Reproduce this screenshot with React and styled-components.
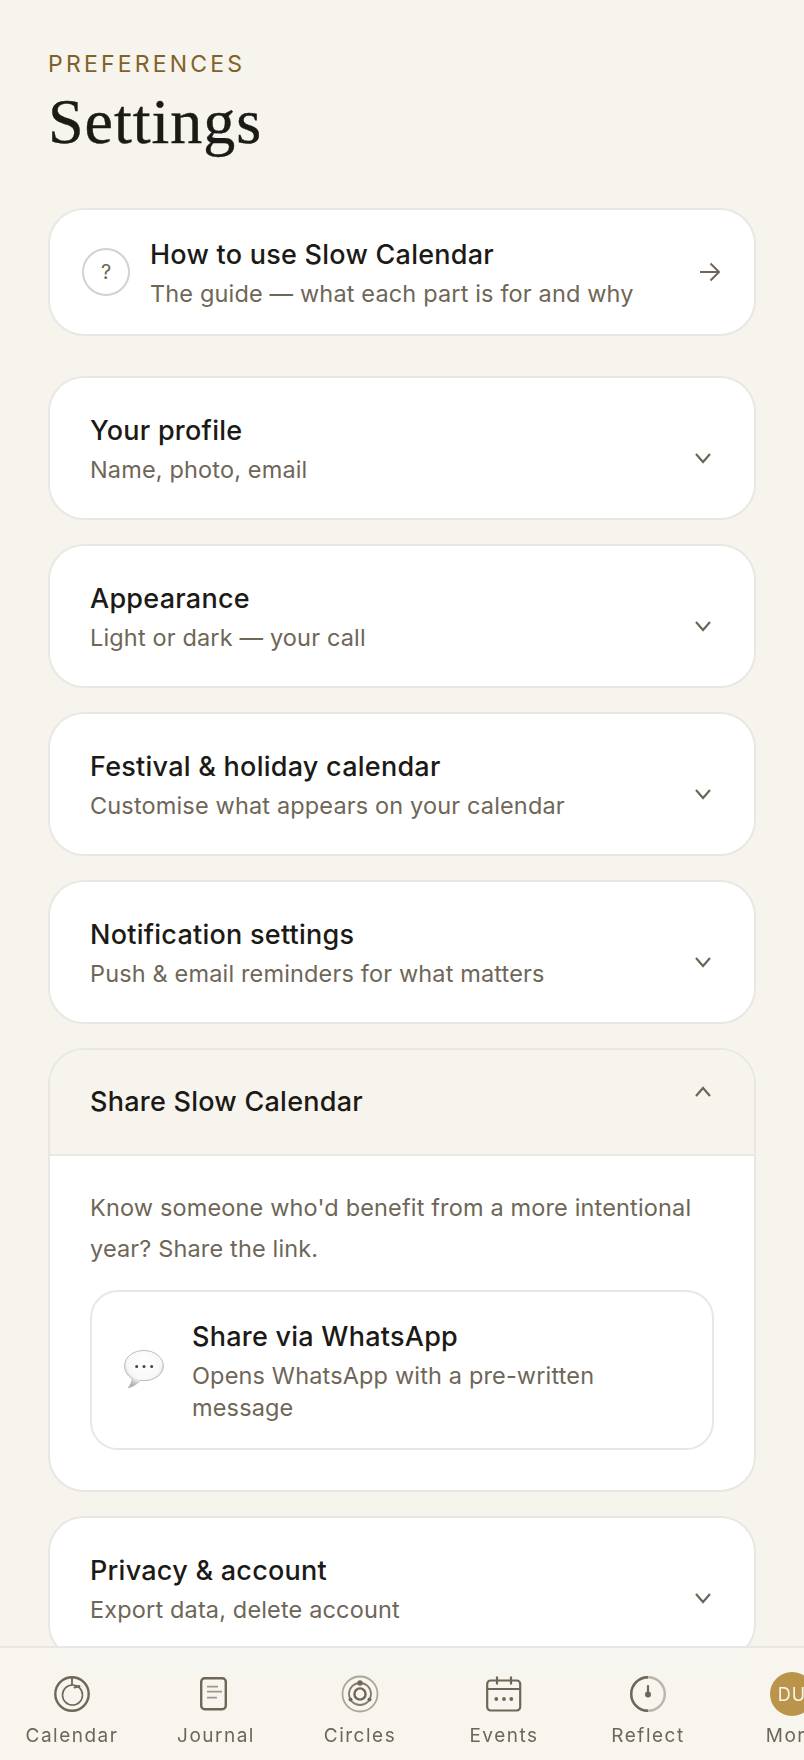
import React from "react";
import styled, { createGlobalStyle } from "styled-components";

const Global = createGlobalStyle`
  html, body { margin: 0; padding: 0; background: #f7f4ee; }
  * { box-sizing: border-box; }
  body { font-family: Inter, "Liberation Sans", sans-serif; -webkit-font-smoothing: antialiased; }
`;

const Page = styled.div`
  position: relative;
  width: 804px;
  height: 1760px;
  overflow: hidden;
  background: #f7f4ee;
`;

const Content = styled.main`
  display: flex;
  flex-direction: column;
  padding: 48px 48px 0;
`;

const Eyebrow = styled.div`
  font-size: 23px;
  line-height: 32px;
  letter-spacing: 3.2px;
  color: #7f6227;
  text-transform: uppercase;
`;

const Title = styled.h1`
  margin: 4px 0 48px;
  font-family: "Liberation Serif", serif;
  font-weight: 400;
  font-size: 64px;
  line-height: 76px;
  letter-spacing: 1px;
  -webkit-text-stroke: 0.4px #1c1a16;
  color: #1c1a16;
`;

const Card = styled.section`
  background: #fff;
  border: 2px solid #e8e7e3;
  border-radius: 36px;
  overflow: hidden;
  margin-bottom: ${(p) => p.$gap || 24}px;
`;

const GuideRow = styled.div`
  display: flex;
  align-items: center;
  gap: 20px;
  padding: 27px 32px 24px;
`;

const HelpCircle = styled.div`
  flex: none;
  width: 48px;
  height: 48px;
  margin-top: -3px;
  border-radius: 50%;
  border: 2px solid #d4d2cd;
  display: flex;
  align-items: center;
  justify-content: center;
  font-size: 20px;
  color: #6e6657;
`;

const Texts = styled.div`
  flex: 1;
  min-width: 0;
`;

const RowTitle = styled.div`
  font-size: 27px;
  line-height: 36px;
  font-weight: 500;
  letter-spacing: 0.25px;
  color: #1c1a16;
`;

const RowSub = styled.div`
  margin-top: 5px;
  font-size: 23.5px;
  line-height: 32px;
  letter-spacing: 0.15px;
  color: #6e6657;
`;

const AccordionHead = styled.div`
  display: flex;
  align-items: center;
  gap: 24px;
  padding: ${(p) => (p.$open ? "0 40px" : "35px 40px 32px")};
  min-height: ${(p) => (p.$open ? 106 : 0)}px;
  background: ${(p) => (p.$open ? "#f7f4ee" : "#fff")};
  border-bottom: ${(p) => (p.$open ? "2px solid #e8e7e3" : "none")};
`;

const Chevron = styled.svg`
  flex: none;
  width: 20px;
  height: 14px;
  margin: ${(p) => (p.$up ? "0 0 21px" : "17px 0 0")};
`;

const AccordionBody = styled.div`
  padding: 32px 40px 40px;
`;

const Paragraph = styled.p`
  margin: 0 0 21px;
  font-size: 23.5px;
  line-height: 40.5px;
  letter-spacing: 0.15px;
  color: #6e6657;
`;

const ShareCard = styled.div`
  display: flex;
  align-items: center;
  gap: 26px;
  padding: 27px 32px 24px;
  border: 2px solid #e8e7e3;
  border-radius: 28px;
  background: #fff;
`;

const Bubble = styled.svg`
  flex: none;
  width: 42px;
  height: 42px;
  margin-top: -3px;
`;

const ArrowSvg = styled.svg`
  flex: none;
  width: 24px;
  height: 24px;
  margin-top: -3px;
`;

const Nav = styled.nav`
  position: absolute;
  left: 0;
  right: 0;
  bottom: 0;
  height: 114px;
  display: flex;
  overflow: hidden;
  border-top: 2px solid #e8e7e3;
  background: rgba(247, 244, 238, 0.94);
  backdrop-filter: blur(12px);
`;

const NavItem = styled.div`
  flex: none;
  width: 144px;
  height: 100%;
  display: flex;
  flex-direction: column;
  align-items: center;
  padding-top: 24px;
`;

const NavIconSlot = styled.div`
  width: 44px;
  height: 44px;
  display: flex;
  align-items: center;
  justify-content: center;
`;

const NavLabel = styled.div`
  margin-top: 6px;
  font-size: 19px;
  line-height: 28px;
  letter-spacing: 1.5px;
  color: #6e6657;
  white-space: nowrap;
`;

const Avatar = styled.div`
  width: 44px;
  height: 44px;
  border-radius: 50%;
  background: #bb944b;
  color: #f7f4ee;
  font-size: 18px;
  letter-spacing: 1px;
  display: flex;
  align-items: center;
  justify-content: center;
`;

const stroke = "#6e6657";

const CalendarIcon = () => (
  <svg width="36" height="36" viewBox="0 0 36 36" fill="none" stroke={stroke}>
    <circle cx="18" cy="18" r="16.7" strokeWidth="2.4" />
    <circle cx="18.5" cy="19" r="10" strokeWidth="1.6" />
    <path d="M18 2v7" strokeWidth="1.8" />
    <path d="M20.5 11.5l5-1.5" strokeWidth="2" strokeLinecap="round" />
  </svg>
);

const JournalIcon = () => (
  <svg width="36" height="36" viewBox="0 0 36 36" fill="none" stroke={stroke}>
    <rect x="3.2" y="2.2" width="24.6" height="31" rx="3.5" strokeWidth="2.4" />
    <path d="M9 10.7h11M9 15.7h15M9 21.7h10" strokeWidth="1.8" opacity=".65" />
  </svg>
);

const CirclesIcon = () => (
  <svg width="38" height="38" viewBox="0 0 38 38" fill="none" stroke={stroke}>
    <circle cx="19" cy="19" r="17.5" strokeWidth="1.8" opacity=".55" />
    <circle cx="19" cy="19" r="11" strokeWidth="1.8" opacity=".85" />
    <circle cx="19" cy="19" r="5.6" strokeWidth="2.4" />
    <circle cx="19" cy="8" r="2.7" fill={stroke} stroke="none" />
    <circle cx="9.5" cy="24.5" r="2" fill={stroke} stroke="none" />
    <circle cx="28.5" cy="24.5" r="2" fill={stroke} stroke="none" />
  </svg>
);

const EventsIcon = () => (
  <svg width="36" height="36" viewBox="0 0 36 36" fill="none" stroke={stroke} strokeWidth="2.2">
    <rect x="1.2" y="4.5" width="33" height="30" rx="3.5" />
    <path d="M1.2 13h33M11 0.5v8M25 0.5v8" />
    <g fill={stroke} stroke="none">
      <circle cx="10.3" cy="23" r="1.9" />
      <circle cx="18" cy="23" r="1.9" />
      <circle cx="25.3" cy="23" r="1.9" />
    </g>
  </svg>
);

const ReflectIcon = () => (
  <svg width="36" height="36" viewBox="0 0 36 36" fill="none">
    <circle cx="18" cy="18" r="16.8" stroke="#b9b5ac" strokeWidth="2.4" />
    <path d="M18 34.8A16.8 16.8 0 0 1 18 1.2" stroke={stroke} strokeWidth="2.4" />
    <path d="M18 10v8" stroke={stroke} strokeWidth="2.2" strokeLinecap="round" />
    <circle cx="18" cy="18.5" r="3" fill={stroke} />
  </svg>
);

const ChevronIcon = ({ up }) => (
  <Chevron $up={up} viewBox="0 0 20 14" fill="none" stroke={stroke} strokeWidth="2.2">
    <path d={up ? "M2 11l7-8 7 8" : "M2 3l7 8 7-8"} />
  </Chevron>
);

const ArrowIcon = () => (
  <ArrowSvg viewBox="0 0 24 24" fill="none" stroke={stroke} strokeWidth="2">
    <path d="M2 12h19M12.5 3.5l8.5 8.5-8.5 8.5" />
  </ArrowSvg>
);

const BubbleIcon = () => (
  <Bubble viewBox="0 0 42 42">
    <defs>
      <radialGradient id="bub" cx="0.5" cy="0.34" r="0.66">
        <stop offset="0" stopColor="#ffffff" />
        <stop offset="0.66" stopColor="#f8f8f8" />
        <stop offset="1" stopColor="#acacac" />
      </radialGradient>
    </defs>
    <path
      d="M20 1.5C9 1.5.6 8 .6 17c0 5.4 3 10 7.8 12.6-.4 3.2-2 6.2-4.2 9.2 4.6-1 9-3.8 11.8-7.4 1.3.2 2.5.3 3.8.3 11 0 19.6-6.6 19.6-14.7S31 1.5 20 1.5z"
      fill="url(#bub)"
      stroke="#bcbcbc"
      strokeWidth="1"
    />
    <g fill="#444">
      <circle cx="12.7" cy="17.5" r="1.5" />
      <circle cx="20" cy="17.5" r="1.5" />
      <circle cx="27.7" cy="17.5" r="1.5" />
    </g>
  </Bubble>
);

const sections = [
  ["Your profile", "Name, photo, email"],
  ["Appearance", "Light or dark — your call"],
  ["Festival & holiday calendar", "Customise what appears on your calendar"],
  ["Notification settings", "Push & email reminders for what matters"],
];

const navItems = [
  ["Calendar", <CalendarIcon />],
  ["Journal", <JournalIcon />],
  ["Circles", <CirclesIcon />],
  ["Events", <EventsIcon />],
  ["Reflect", <ReflectIcon />],
  ["More", <Avatar>DU</Avatar>],
];

const Section = ({ title, sub }) => (
  <Card>
    <AccordionHead>
      <Texts>
        <RowTitle>{title}</RowTitle>
        <RowSub>{sub}</RowSub>
      </Texts>
      <ChevronIcon />
    </AccordionHead>
  </Card>
);

export default function App() {
  return (
    <Page>
      <Global />
      <Content>
        <Eyebrow>Preferences</Eyebrow>
        <Title>Settings</Title>
        <Card $gap={40}>
          <GuideRow>
            <HelpCircle>?</HelpCircle>
            <Texts>
              <RowTitle>How to use Slow Calendar</RowTitle>
              <RowSub>The guide — what each part is for and why</RowSub>
            </Texts>
            <ArrowIcon />
          </GuideRow>
        </Card>
        {sections.map(([t, s]) => (
          <Section key={t} title={t} sub={s} />
        ))}
        <Card>
          <AccordionHead $open>
            <Texts>
              <RowTitle>Share Slow Calendar</RowTitle>
            </Texts>
            <ChevronIcon up />
          </AccordionHead>
          <AccordionBody>
            <Paragraph>Know someone who'd benefit from a more intentional year? Share the link.</Paragraph>
            <ShareCard>
              <BubbleIcon />
              <Texts>
                <RowTitle>Share via WhatsApp</RowTitle>
                <RowSub>Opens WhatsApp with a pre-written message</RowSub>
              </Texts>
            </ShareCard>
          </AccordionBody>
        </Card>
        <Section title="Privacy & account" sub="Export data, delete account" />
      </Content>
      <Nav>
        {navItems.map(([label, icon]) => (
          <NavItem key={label}>
            <NavIconSlot>{icon}</NavIconSlot>
            <NavLabel>{label}</NavLabel>
          </NavItem>
        ))}
      </Nav>
    </Page>
  );
}
